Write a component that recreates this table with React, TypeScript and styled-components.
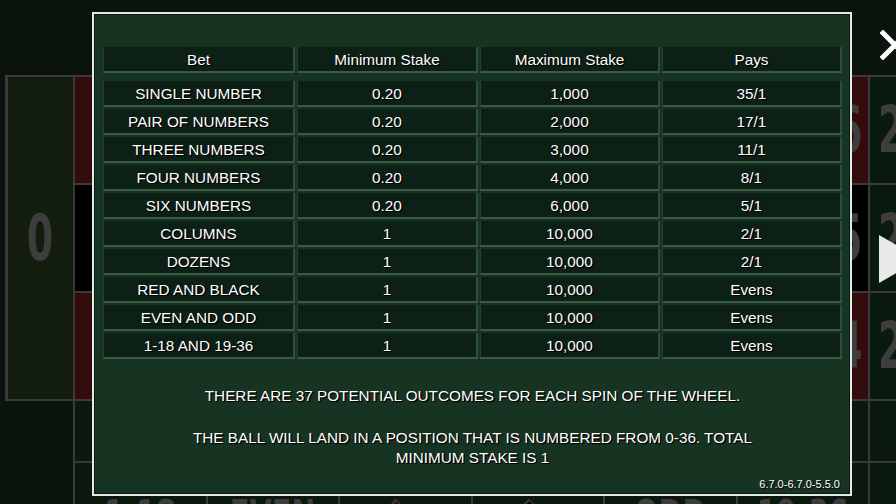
import React from "react";
import styled, { createGlobalStyle } from "styled-components";

const GlobalStyle = createGlobalStyle`
  html, body { margin: 0; padding: 0; background: #0a140c; }
  body { font-family: "Liberation Sans", Arial, sans-serif; overflow: hidden; }
`;

const Stage = styled.div`
  position: relative;
  width: 896px;
  height: 504px;
  overflow: hidden;
  background: #0a140c;
`;

/* ---------- background roulette felt ---------- */
const Felt = styled.div`
  display: grid;
  grid-template-columns: 68px repeat(12, 64.25px) 66px;
  grid-template-rows: 106px 106px 106px 60px 60px;
  gap: 2px;
  margin: 75px 0 0 5px;
  padding-top: 2px;
  width: max-content;
  background: #3a3a3a;
`;

const ZeroCell = styled.div`
  grid-column: 1;
  grid-row: 1 / span 3;
  border-left: 3px solid #3a3a3a;
  background: #121d0f;
  display: flex;
  align-items: center;
  justify-content: center;
`;

const Blank = styled.div`
  grid-column: 1;
  grid-row: 4 / span 2;
  background: #0a140c;
  margin-left: -1px;
`;

const NumCell = styled.div<{ $tone: "red" | "black" }>`
  background: ${(p) => (p.$tone === "red" ? "#330b0b" : "#000000")};
  display: flex;
  align-items: center;
  justify-content: center;
`;

const SideCell = styled.div`
  background: #0b1a0f;
  display: flex;
  align-items: center;
  justify-content: flex-start;
  padding-left: 8px;
`;

const LowCell = styled.div<{ $span: number }>`
  grid-column: span ${(p) => p.$span};
  background: #0b180e;
  display: flex;
  justify-content: center;
  align-items: flex-start;
  padding-top: 32px;
`;

const BigNum = styled.span<{ $left?: boolean }>`
  font-family: "DejaVu Sans Condensed", "DejaVu Sans", sans-serif;
  font-weight: bold;
  font-size: 64px;
  line-height: 1;
  color: #3d3d3d;
  display: inline-block;
  transform: scaleX(0.66);
  transform-origin: ${(p) => (p.$left ? "left center" : "center")};
  white-space: nowrap;
`;

const LowLabel = styled.span`
  font-family: "DejaVu Sans Condensed", "DejaVu Sans", sans-serif;
  font-weight: bold;
  font-size: 40px;
  line-height: 1;
  color: #3c3c3c;
  transform: scaleX(0.8);
  white-space: nowrap;
`;

const Diamond = styled.div<{ $c: string }>`
  width: 60px;
  height: 60px;
  margin-top: 8px;
  transform: rotate(45deg) scaleY(0.6);
  background: ${(p) => p.$c};
  border: 2px solid #3c3c3c;
`;

/* ---------- overlay controls ---------- */
const CloseIcon = styled.svg`
  position: absolute;
  left: 880px;
  top: 30px;
  width: 30px;
  height: 30px;
`;

const PlayIcon = styled.svg`
  position: absolute;
  left: 879px;
  top: 235px;
  width: 44px;
  height: 50px;
`;

/* ---------- modal ---------- */
const Modal = styled.div`
  position: absolute;
  left: 92px;
  top: 12px;
  width: 760px;
  height: 484px;
  box-sizing: border-box;
  border: 2px solid #e4ebe5;
  box-shadow: inset 0 0 0 1px #0b1a10;
  background: #173321;
  padding: 33px 8px 0 9px;
  display: flex;
  flex-direction: column;
  color: #ffffff;
`;

const Table = styled.div`
  display: grid;
  grid-template-columns: 192px 181px 180px 180px;
  grid-template-rows: 32px repeat(10, 26px);
  column-gap: 2px;
  row-gap: 2px;
`;

const Cell = styled.div<{ $head?: boolean }>`
  box-sizing: border-box;
  height: 26px;
  align-self: start;
  background: #0d2015;
  border-left: 1px solid #24402e;
  border-right: 2px solid #2f4e39;
  border-bottom: 2px solid #3b5a45;
  display: flex;
  align-items: center;
  justify-content: center;
  font-size: 15.3px;
  line-height: 1;
  padding-top: 1px;
  text-shadow: 1px 1px 1px #000, 1px 1px 0 #000;
  white-space: nowrap;
`;

const Notes = styled.div`
  display: flex;
  flex-direction: column;
  align-items: center;
  margin-top: 27px;
  gap: 22px;
`;

const Note = styled.p`
  margin: 0;
  max-width: 600px;
  text-align: center;
  font-size: 15.3px;
  line-height: 20px;
  text-shadow: 1px 1px 1px #000, 1px 1px 0 #000;
`;

const Version = styled.div`
  margin-top: 9px;
  align-self: flex-end;
  padding-right: 2px;
  font-size: 11px;
  line-height: 14px;
  text-shadow: 1px 1px 1px #000;
`;

const rows: [string, string, string, string][] = [
  ["SINGLE NUMBER", "0.20", "1,000", "35/1"],
  ["PAIR OF NUMBERS", "0.20", "2,000", "17/1"],
  ["THREE NUMBERS", "0.20", "3,000", "11/1"],
  ["FOUR NUMBERS", "0.20", "4,000", "8/1"],
  ["SIX NUMBERS", "0.20", "6,000", "5/1"],
  ["COLUMNS", "1", "10,000", "2/1"],
  ["DOZENS", "1", "10,000", "2/1"],
  ["RED AND BLACK", "1", "10,000", "Evens"],
  ["EVEN AND ODD", "1", "10,000", "Evens"],
  ["1-18 AND 19-36", "1", "10,000", "Evens"],
];

const REDS = new Set([1, 3, 5, 7, 9, 12, 14, 16, 18, 19, 21, 23, 25, 27, 30, 32, 34, 36]);

export default function App() {
  const feltCells: React.ReactNode[] = [];
  feltCells.push(
    <ZeroCell key="zero">
      <BigNum>0</BigNum>
    </ZeroCell>
  );
  for (let r = 0; r < 3; r++) {
    for (let c = 0; c < 12; c++) {
      const n = c * 3 + (3 - r);
      feltCells.push(
        <NumCell key={`n${n}`} $tone={REDS.has(n) ? "red" : "black"}>
          <BigNum>{n}</BigNum>
        </NumCell>
      );
    }
    feltCells.push(
      <SideCell key={`s${r}`}>
        <BigNum $left>2to1</BigNum>
      </SideCell>
    );
  }
  feltCells.push(<Blank key="blank" />);
  ["1st 12", "2nd 12", "3rd 12"].forEach((t) =>
    feltCells.push(
      <LowCell key={t} $span={4}>
        <LowLabel>{t}</LowLabel>
      </LowCell>
    )
  );
  feltCells.push(<SideCell key="s-d" />);
  feltCells.push(
    <LowCell key="l1" $span={2}>
      <LowLabel>1-18</LowLabel>
    </LowCell>,
    <LowCell key="l2" $span={2}>
      <LowLabel>EVEN</LowLabel>
    </LowCell>,
    <LowCell key="l3" $span={2}>
      <Diamond $c="#330b0b" />
    </LowCell>,
    <LowCell key="l4" $span={2}>
      <Diamond $c="#000" />
    </LowCell>,
    <LowCell key="l5" $span={2}>
      <LowLabel>ODD</LowLabel>
    </LowCell>,
    <LowCell key="l6" $span={2}>
      <LowLabel>19-36</LowLabel>
    </LowCell>,
    <SideCell key="s-e" />
  );

  return (
    <Stage>
      <GlobalStyle />
      <Felt>{feltCells}</Felt>

      <CloseIcon viewBox="0 0 30 30">
        <path d="M3 3 L27 27 M27 3 L3 27" stroke="#ffffff" strokeWidth="5" strokeLinecap="square" fill="none" />
      </CloseIcon>
      <PlayIcon viewBox="0 0 44 50">
        <polygon points="0,0 0,48 42,24" fill="#e9e9e9" />
      </PlayIcon>

      <Modal>
        <Table>
          {["Bet", "Minimum Stake", "Maximum Stake", "Pays"].map((h) => (
            <Cell key={h} $head>
              {h}
            </Cell>
          ))}
          {rows.map((r) =>
            r.map((v, i) => <Cell key={r[0] + i}>{v}</Cell>)
          )}
        </Table>
        <Notes>
          <Note>THERE ARE 37 POTENTIAL OUTCOMES FOR EACH SPIN OF THE WHEEL.</Note>
          <Note>
            THE BALL WILL LAND IN A POSITION THAT IS NUMBERED FROM 0-36. TOTAL MINIMUM STAKE IS 1
          </Note>
        </Notes>
        <Version>6.7.0-6.7.0-5.5.0</Version>
      </Modal>
    </Stage>
  );
}
